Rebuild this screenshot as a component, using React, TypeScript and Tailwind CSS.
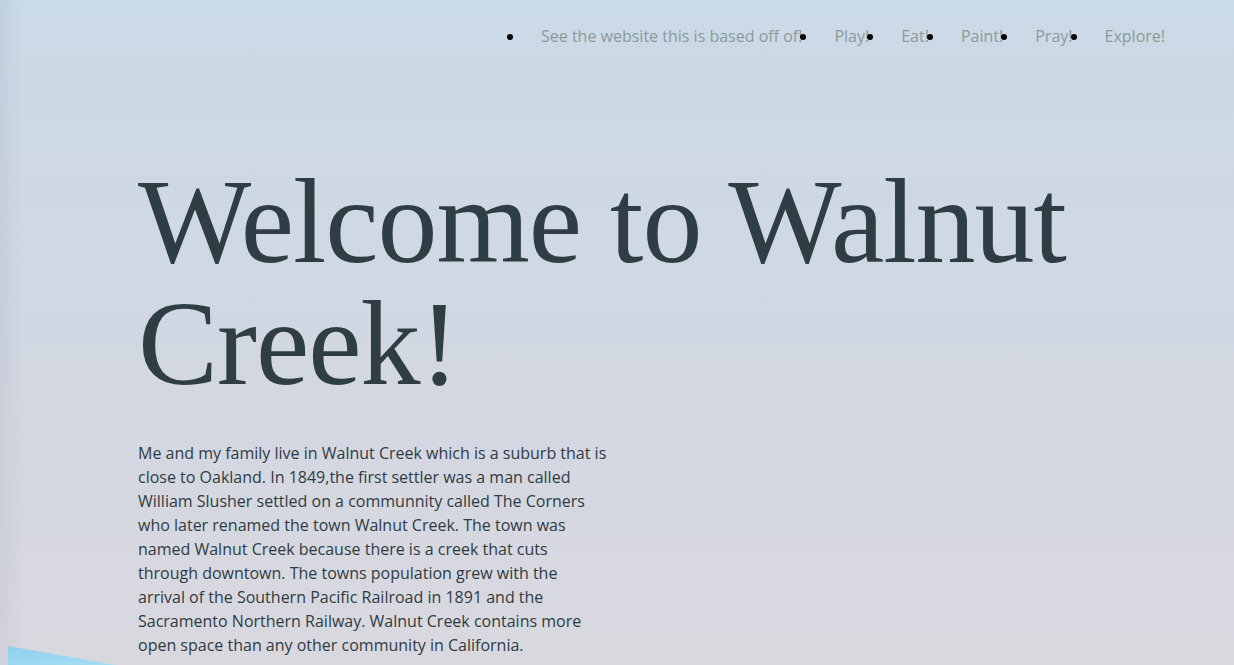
import React from "react";

const navItems = [
  "See the website this is based off of!",
  "Play!",
  "Eat!",
  "Paint!",
  "Pray!",
  "Explore!",
];

export default function App() {
  return (
    <div
      className="relative h-[665px] w-full overflow-hidden bg-[linear-gradient(to_right,rgba(120,130,150,0.10),rgba(120,130,150,0)_24px),linear-gradient(to_bottom,#cadae6,#d2d7e2_55%,#d9d8df)]"
      style={{ fontFamily: '"Open Sans", "Liberation Sans", sans-serif' }}
    >
      <header className="flex justify-end pr-[69px] pt-[24px]">
        <ul className="flex gap-[32px] text-[16px] leading-[24px] text-[#8b9a9b]">
          {navItems.map((item) => (
            <li key={item} className="relative">
              <span className="absolute left-[-34px] top-[10px] h-[6px] w-[6px] rounded-full bg-black" />
              <a href="#">{item}</a>
            </li>
          ))}
        </ul>
      </header>

      <main className="pl-[138px]">
        <h1
          className="mt-[113px] text-[120px] leading-[122px] tracking-[-1px] text-[#2f3e44]"
          style={{ fontFamily: '"Liberation Serif", "DejaVu Serif", serif' }}
        >
          Welcome to Walnut
          <br />
          Creek!
        </h1>
        <p className="mt-[36px] w-[470px] text-[16px] leading-[24px] text-[#2f3b42]">
          Me and my family live in Walnut Creek which is a suburb that is close to Oakland. In
          1849,the first settler was a man called William Slusher settled on a communnity called
          The Corners who later renamed the town Walnut Creek. The town was named Walnut Creek
          because there is a creek that cuts through downtown. The towns population grew with the
          arrival of the Southern Pacific Railroad in 1891 and the Sacramento Northern Railway.
          Walnut Creek contains more open space than any other community in California.
        </p>
      </main>

      <svg className="absolute bottom-0 left-0" width="140" height="22" viewBox="0 0 140 22">
        <defs>
          <linearGradient id="sky" x1="0" y1="0" x2="1" y2="1">
            <stop offset="0" stopColor="#8fd0ee" />
            <stop offset="1" stopColor="#a6def2" />
          </linearGradient>
        </defs>
        <polygon points="8,3 116,22 8,22" fill="url(#sky)" />
      </svg>
    </div>
  );
}
